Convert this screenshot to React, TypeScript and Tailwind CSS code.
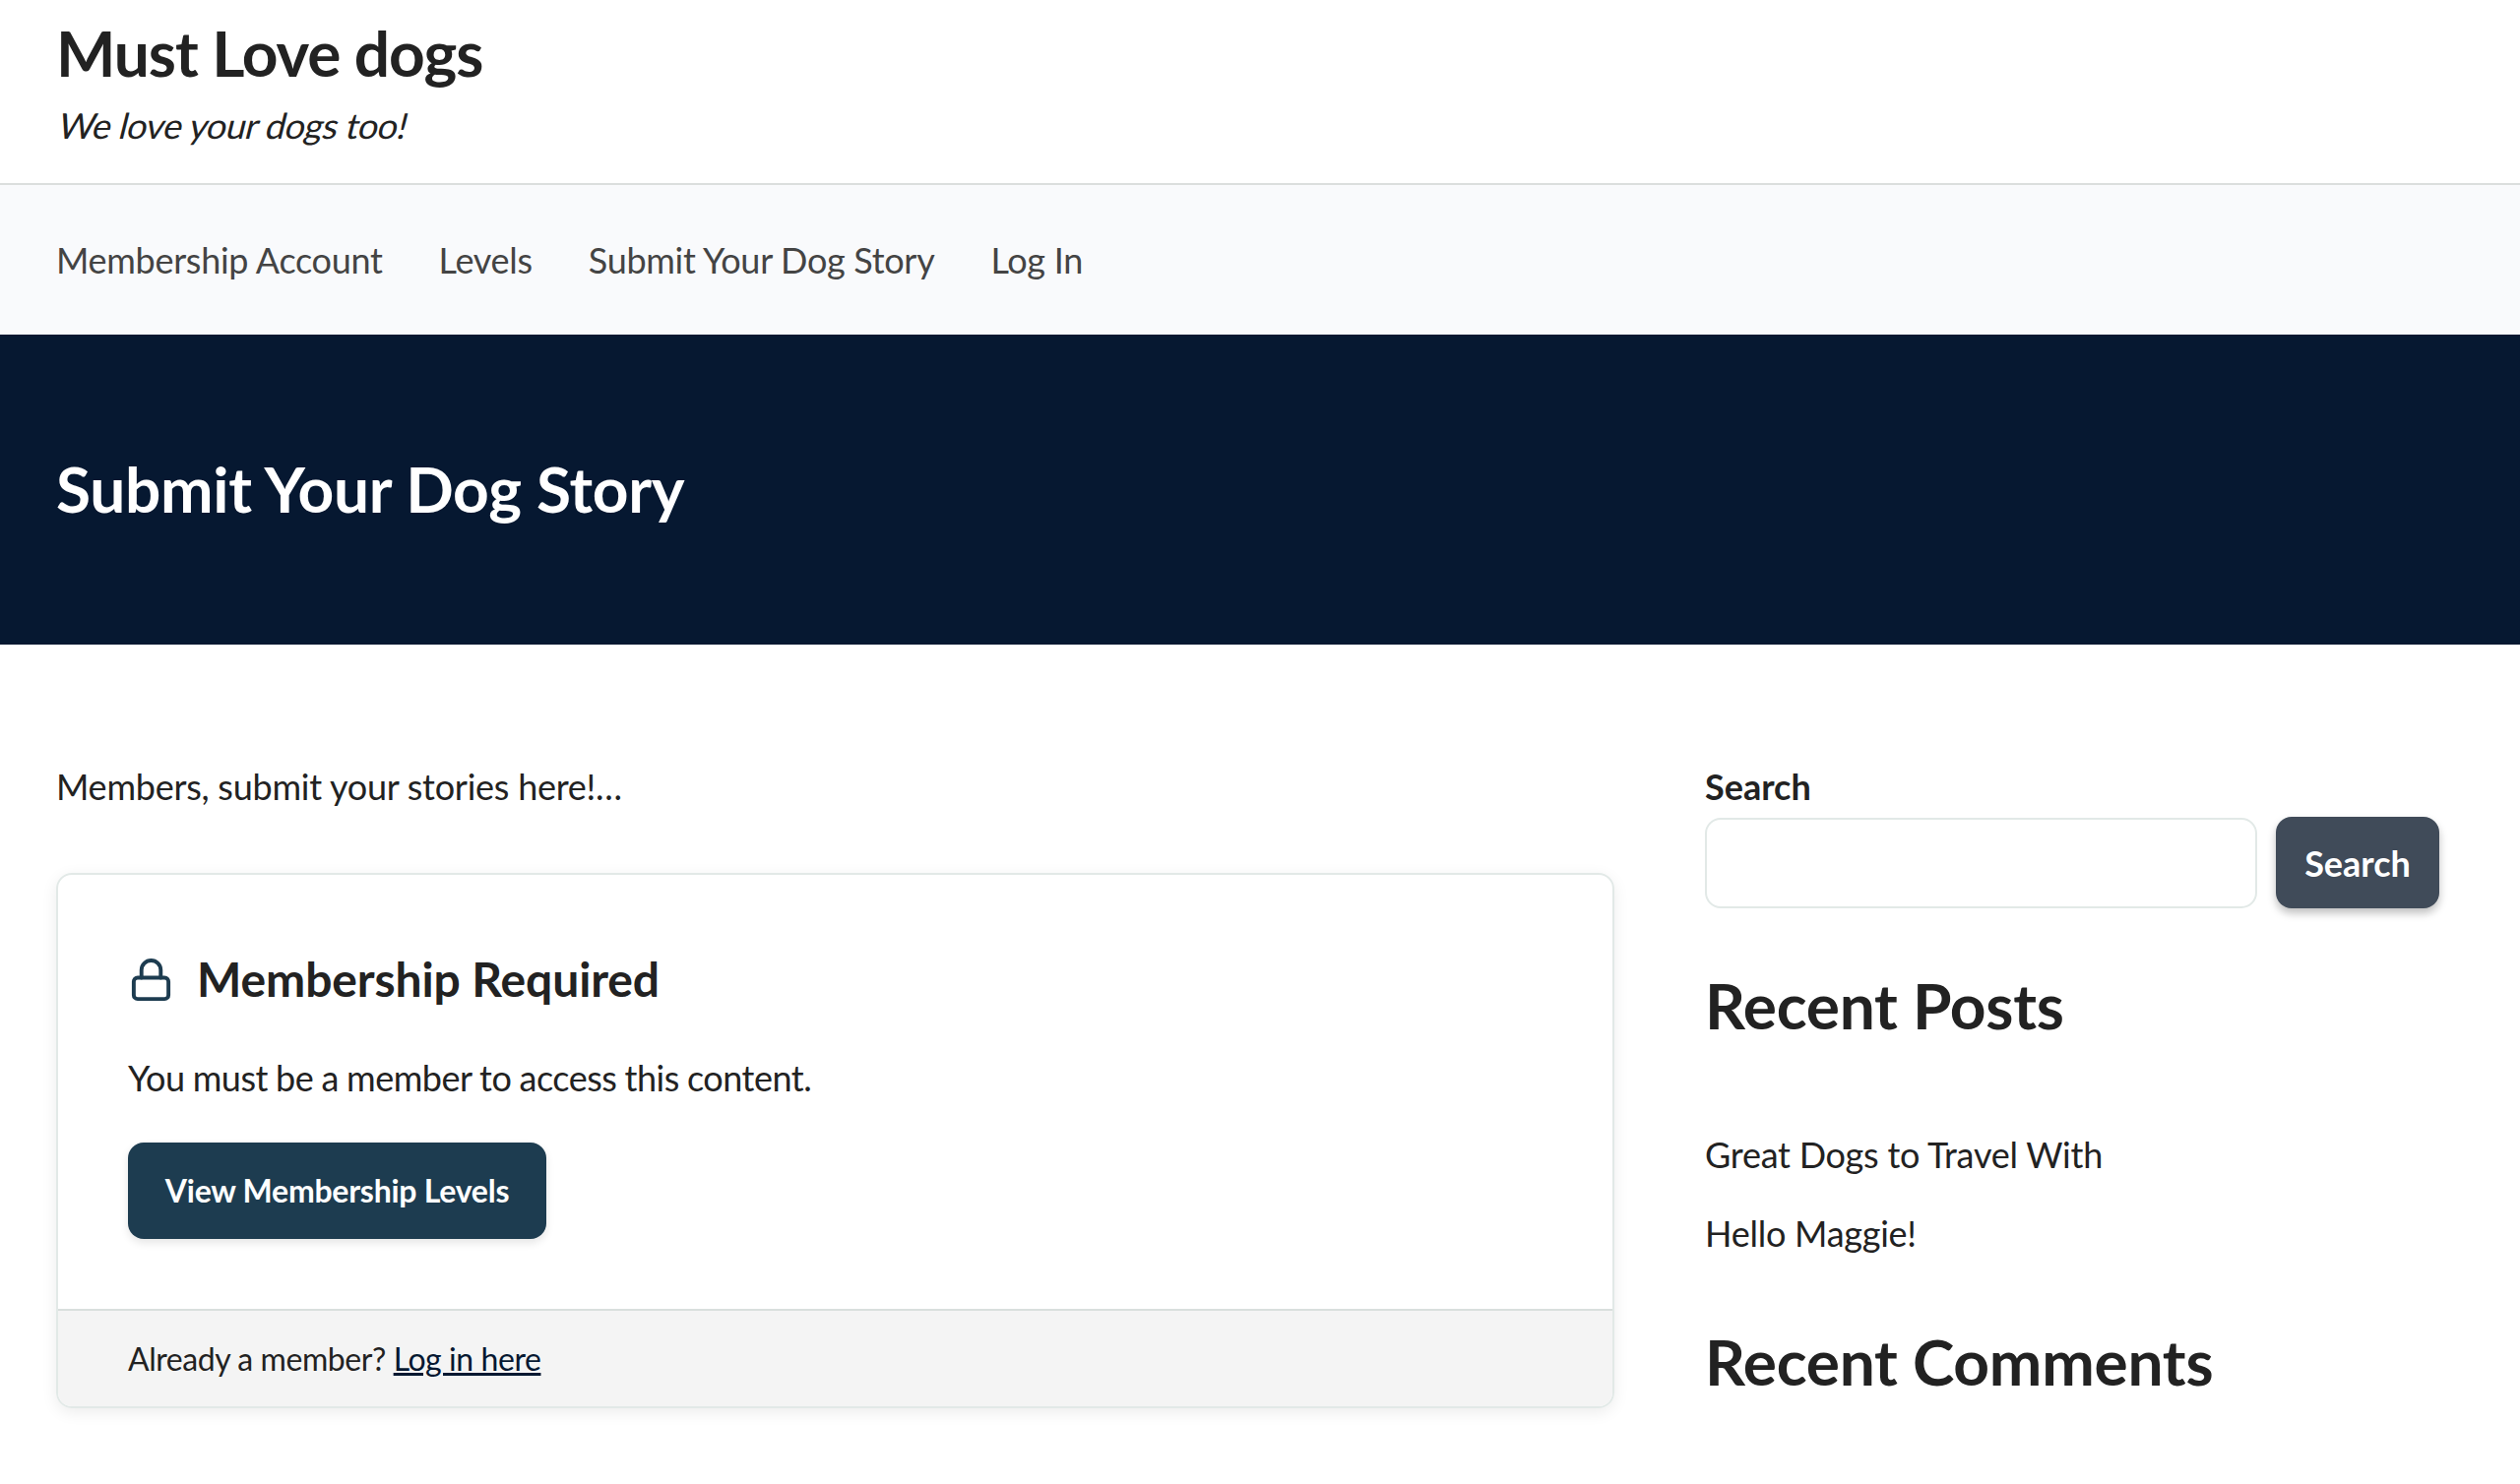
import type { ReactNode } from "react";

const navLinks = ["Membership Account", "Levels", "Submit Your Dog Story", "Log In"];
const recentPosts = ["Great Dogs to Travel With", "Hello Maggie!"];

function SidebarHeading({ children }: { children: ReactNode }) {
  return (
    <h2 className="text-[64px] font-bold leading-[83px]">{children}</h2>
  );
}

function LockIcon() {
  return (
    <svg
      className="h-[47px] w-[47px] shrink-0"
      viewBox="0 0 24 24"
      fill="none"
      stroke="#1d3c50"
      strokeWidth={2}
      strokeLinecap="round"
      strokeLinejoin="round"
    >
      <rect x="3" y="11" width="18" height="11" rx="2" />
      <path d="M7 11V7a5 5 0 0 1 10 0v4" />
    </svg>
  );
}

export default function App() {
  return (
    <div className="h-[1508px] overflow-hidden bg-white font-[Lato,sans-serif] text-[36px] leading-[54px] tracking-[-0.25px] text-[#222]">
      <header className="h-[186px] px-[57px] pt-3">
        <h1 className="text-[64px] font-bold leading-[83px] tracking-[-1.05px]">Must Love dogs</h1>
        {/* slanted upright face instead of the true italic */}
        <p className="mt-[5px] w-fit origin-[0_41px] -skew-x-[14deg] tracking-[-0.5px]">We love your dogs too!</p>
      </header>

      <nav className="flex h-[154px] items-center gap-[57px] border-t-2 border-[#dbdedd] bg-[#f9fafc] px-[57px] tracking-[-0.3px] text-[#444]">
        {navLinks.map((link) => (
          <a key={link} href="#">{link}</a>
        ))}
      </nav>

      <section className="flex h-[315px] items-center bg-[#061831] px-[57px] pb-0.5">
        <h1 className="text-[64px] font-bold leading-[83px] tracking-[-0.3px] text-white">Submit Your Dog Story</h1>
      </section>

      <div className="flex gap-[92px] px-[57px] pt-[117px]">
        <main className="w-[1583px]">
          <p>Members, submit your stories here!…</p>
          <div className="mt-[61px] overflow-hidden rounded-2xl border-2 border-[#e2e9e7] shadow-[0_4px_16px_rgba(0,0,0,0.08)]">
            <div className="px-[71px] pt-[72px] pb-[71px]">
              <h2 className="flex items-center gap-[23px] text-[48px] font-bold leading-[68px] tracking-[-0.1px]">
                <LockIcon />
                Membership Required
              </h2>
              <p className="mt-[39px] tracking-[-0.5px] [word-spacing:-0.5px]">You must be a member to access this content.</p>
              <a
                href="#"
                className="mt-[39px] flex h-[98px] w-[425px] items-center justify-center rounded-2xl bg-[#1d3c50] text-[32px] font-bold leading-[50px] text-white shadow-[0_4px_8px_rgba(0,0,0,0.1)]"
              >
                View Membership Levels
              </a>
            </div>
            <div className="h-[99px] border-t-2 border-[#d9dfdd] bg-[#f4f4f4] px-[71px] text-[32px] leading-[97px] tracking-[-0.43px]">
              Already a member?{" "}
              <a href="#" className="text-[#061831] underline decoration-[3px] underline-offset-2">Log in here</a>
            </div>
          </div>
        </main>

        <aside className="w-[746px]">
          <label htmlFor="search" className="block font-bold tracking-normal">Search</label>
          <div className="mt-1 flex items-end gap-[19px]">
            <input id="search" className="h-[92px] w-[561px] rounded-2xl border-2 border-[#e2e9e7]" />
            <button className="h-[93px] w-[166px] rounded-2xl bg-[#404b59] font-bold tracking-normal text-white shadow-[0_5px_9px_rgba(0,0,0,0.25)]">
              Search
            </button>
          </div>
          <div className="mt-[57px]">
            <SidebarHeading>Recent Posts</SidebarHeading>
          </div>
          <ul className="mt-[83px] space-y-[26px]">
            {recentPosts.map((post) => (
              <li key={post}><a href="#">{post}</a></li>
            ))}
          </ul>
          <div className="mt-[62px]">
            <SidebarHeading>Recent Comments</SidebarHeading>
          </div>
        </aside>
      </div>
    </div>
  );
}
